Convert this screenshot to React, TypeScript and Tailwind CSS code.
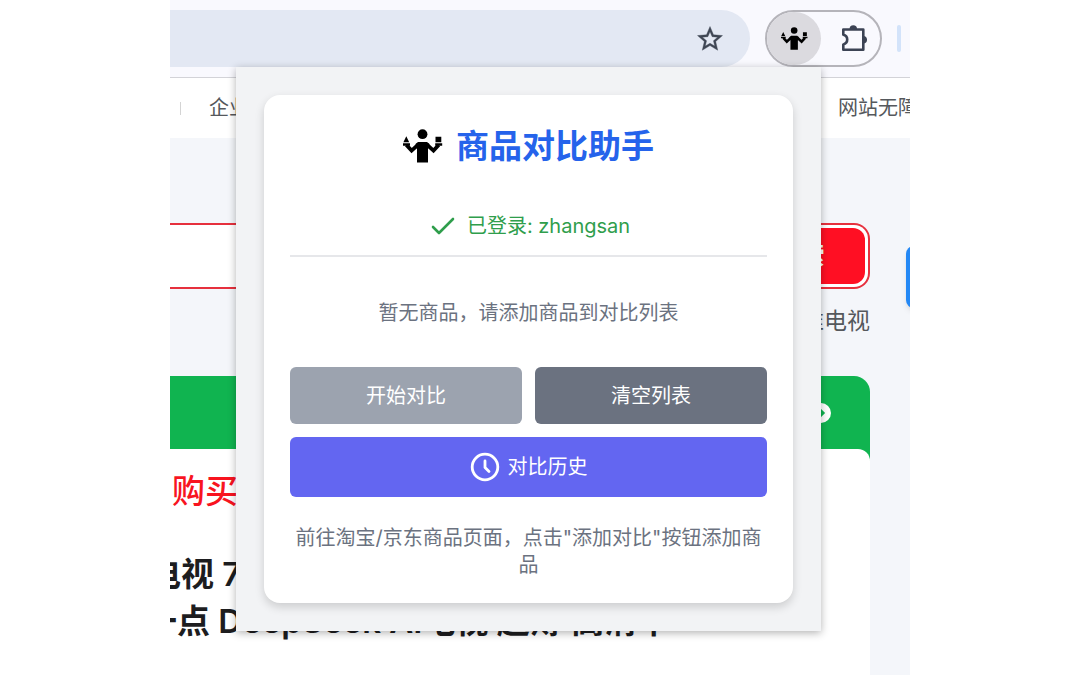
import React from "react";

const FONT = "font-[Inter,'Noto_Sans_CJK_SC',sans-serif]";

function ComparerIcon({ className }: { className: string }) {
  return (
    <svg viewBox="0 0 40 34" className={className} fill="currentColor" aria-hidden="true">
      <circle cx="19.500" cy="5.200" r="4.900" />
      <path d="M15 13h9l2.500 2-1.500 5V33.500H14V20l-1.500-5z" />
      <path d="M3.400 16l5.200 5.600 6.600-6M23.900 15.600l6.600 6 5.200-5.600" fill="none" stroke="currentColor" strokeWidth="3.800" />
      <path d="M0 14.300h7v2.400H0zM32.200 14.300h7v2.400h-7zM3.300 7.300l2.900 5.900H.4zM32.500 7.700h5.800v5.500h-5.800z" />
    </svg>
  );
}

function PuzzleIcon() {
  return (
    <svg viewBox="0 0 28 28" className="size-7" fill="none" stroke="#3c4354" strokeWidth="2.6" strokeLinejoin="round" aria-hidden="true">
      <path d="M2.300 4.500H22.300V24.800H2.300V19.400a4.900 4.900 0 0 0 0-9.600z" />
      <path d="M8.600 4a3.700 3.700 0 0 1 7.400 0zM23 10.900a3.900 3.900 0 0 1 0 7.600z" fill="#3c4354" stroke="none" />
    </svg>
  );
}

function Toolbar() {
  return (
    <header className="flex h-[78px] items-start border-b border-[#d3d3d8] bg-[#f9f9fe] pt-[10px] pr-[9px]">
      <div className="flex h-[57px] flex-1 items-center justify-end rounded-r-full bg-[#e3e8f3] pr-[25px]">
        <button type="button" aria-label="收藏" className="text-[#3f4654]">
          <svg viewBox="0 0 24 24" className="size-[30px]" fill="currentColor" stroke="currentColor" strokeWidth="0.3" aria-hidden="true">
            <path d="M22 9.240l-7.190-.62L12 2 9.190 8.630 2 9.240l5.460 4.730L5.820 21 12 17.270 18.180 21l-1.630-7.030zM12 15.400l-3.760 2.270 1-4.280-3.320-2.880 4.380-.38L12 6.100l1.710 4.040 4.380.38-3.320 2.880 1 4.280z" />
          </svg>
        </button>
      </div>
      <div className="ml-[15px] flex h-[57px] w-[117px] items-center rounded-full border-2 border-[#b5b4ba]">
        <button type="button" aria-label="商品对比助手" className="flex h-[53px] w-[54px] items-center justify-center rounded-full bg-[#dbdadf] text-black">
          <ComparerIcon className="h-[23px] w-[27px]" />
        </button>
        <button type="button" aria-label="扩展程序" className="ml-5">
          <PuzzleIcon />
        </button>
      </div>
      <span className="mt-[15px] ml-[15px] h-[27px] w-1 rounded-sm bg-[#d3e3fa]" />
    </header>
  );
}

function Storefront() {
  return (
    <div className="bg-[#f4f6fa]">
      <nav className="flex h-[60px] items-center bg-white text-xl whitespace-nowrap text-[#55585c]">
        <span className="ml-[10px] h-[13px] w-px bg-[#d4d4d4]" />
        <a href="#enterprise" className="ml-7">企业采购</a>
        <a href="#accessible" className="-mr-2 ml-auto">网站无障</a>
      </nav>
      <div className="pr-10">
        <form className="pt-[85px]" onSubmit={(e) => e.preventDefault()}>
          <div className="flex h-[66px] items-center rounded-r-2xl border-2 border-l-0 border-[#e6303d] bg-white pr-[3px]">
            <input aria-label="搜索商品" className="h-full min-w-0 flex-1 outline-none" />
            <button type="submit" className="h-14 w-[133px] rounded-xl bg-[#ff0f23] pl-1 text-2xl font-bold text-white">搜索</button>
          </div>
        </form>
        <p className="mt-4 text-right text-[23px] leading-8 text-[#55585c]">创维电视</p>
        <section className="mt-[39px] rounded-tr-2xl bg-[#10b450]">
          <div className="flex h-[73px] items-center justify-end pr-[39px]">
            <span className="flex size-5 items-center justify-center rounded-full bg-white text-[#10b450]">
              <svg viewBox="0 0 20 20" className="size-5" fill="none" stroke="currentColor" strokeWidth="3" aria-hidden="true">
                <path d="M8 6l4 4-4 4" />
              </svg>
            </span>
          </div>
          <div className="h-[226px] overflow-hidden rounded-tr-xl bg-white whitespace-nowrap">
            <p className="mt-[18px] ml-[2px] text-[33px] leading-[48px] font-medium text-[#f8141f]">购买</p>
            <h2 className="mt-9 text-[33px] leading-[47px] font-semibold text-[#1d1d1f]">
              <span className="-ml-[22px] block">电视 75英寸</span>
              <span className="-ml-[26px] block">一点 DeepSeek AI电视 超薄 高清平</span>
            </h2>
          </div>
        </section>
      </div>
    </div>
  );
}

function Popup() {
  return (
    <div className="absolute top-[67px] right-[89px] left-[66px] bg-[#f2f3f5] p-7 shadow-[0_2px_8px_rgba(0,0,0,0.3)]">
      <main className="rounded-2xl bg-white px-[26px] pt-6 pb-6 text-center text-xl text-[#6b7280] shadow-[0_4px_10px_rgba(0,0,0,0.16)]">
        <h1 className="flex items-center justify-center gap-[13px] text-[33px] leading-[54px] font-bold text-[#2563eb]">
          <ComparerIcon className="h-[34px] w-10 text-black" />
          商品对比助手
        </h1>
        <p className="mt-[39px] flex items-center justify-center gap-3 border-b-2 border-[#e6e7ea] pb-[15px] leading-7 text-[#2f9e4c]">
          <svg viewBox="-5 0 28 24" className="h-6 w-7" fill="none" stroke="currentColor" strokeWidth="2.600" strokeLinecap="round" strokeLinejoin="round" aria-hidden="true">
            <path d="M1 13l6 6L21 5" />
          </svg>
          已登录: zhangsan
        </p>
        <p className="mt-[42px] leading-7">暂无商品，请添加商品到对比列表</p>
        <div className="mt-10 grid grid-cols-2 gap-[13px] text-white">
          <button type="button" className="h-[57px] rounded-md bg-[#9ca3af]">开始对比</button>
          <button type="button" className="h-[57px] rounded-md bg-[#6b7280]">清空列表</button>
          <button type="button" className="col-span-2 flex h-[60px] items-center justify-center gap-2 rounded-md bg-[#6366f1]">
            <svg viewBox="0 0 30 30" className="size-[30px]" fill="none" stroke="currentColor" strokeWidth="2.800" strokeLinecap="round" strokeLinejoin="round" aria-hidden="true">
              <circle cx="15" cy="15" r="12.800" />
              <path d="M15 9v6.500l4 4" />
            </svg>
            对比历史
          </button>
        </div>
        <p className="mt-7 leading-[27px]">前往淘宝/京东商品页面，点击"添加对比"按钮添加商品</p>
      </main>
    </div>
  );
}

export default function App() {
  return (
    <div className={`min-h-screen bg-white ${FONT}`}>
      <div className="relative mx-auto max-w-[740px] overflow-hidden">
        <Toolbar />
        <Storefront />
        <Popup />
        <button type="button" aria-label="侧边工具" className="absolute top-[246px] -right-5 h-[62px] w-6 rounded-lg bg-[#2388f5] shadow-md" />
      </div>
    </div>
  );
}
